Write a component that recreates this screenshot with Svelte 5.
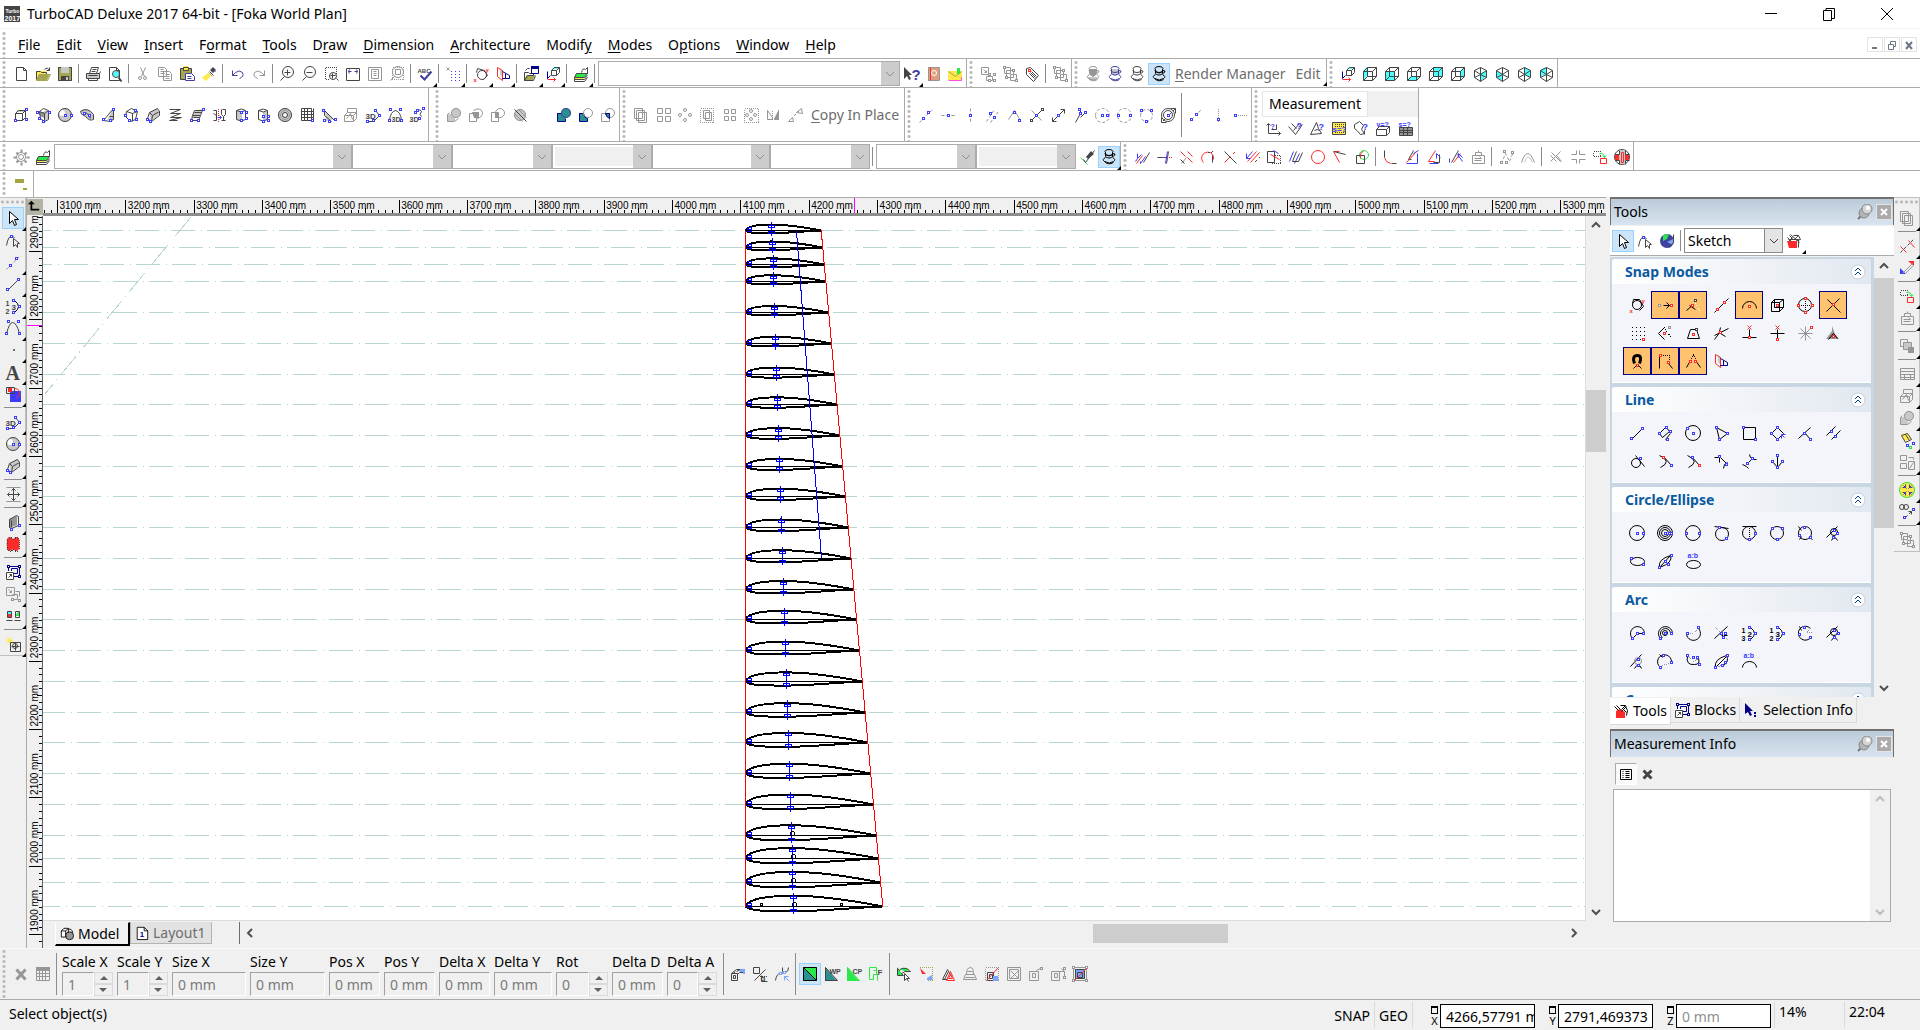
<script>
  const colors = {
    k: '#444444', K: '#000000', b: '#3c3cff', B: '#00008b', r: '#ff2a2a', g: '#969696', G: '#c8c8c8',
    w: '#ffffff', y: '#ffe84a', o: '#a5a552', t: '#4aa5a5', T: '#2a9090', c: '#4affff', l: '#2ae84a',
    n: '#4040a0', p: '#ff4ae8', s: '#e0a080', u: '#7aa5ff'
  };

  // Each icon is a list of shapes split by ";": operator, colour key, then geometry on a 16 unit grid.
  // s stroke, f fill, d dotted stroke, v sparse dots, h heavy stroke, c circle, e filled circle, n nodes, x text
  const cube = 'sk M1 5H10V14H1ZM1 5L5 1H14V10L10 14M10 5L14 1M5 1V10H14M5 10L1 14';
  const iso = 'sk M8 1L14 4V11L8 15L2 11V4ZM2 4L8 8L14 4M8 8V15M8 1V8M2 11L8 8L14 11';
  const groupG = 'sg M4 4H11V11H4ZM2 1H8V7H2ZM8 8H14V14H8Z;ng 2,1 11,4 4,11 14,14';
  const cup = 'M4 3A4 2 0 1 0 11 3A4 2 0 1 0 4 3V7A4 3 0 0 0 11 7V3M11 4Q15 4 13 6L11 7M4 8Q0 10 3 12Q8 15 12 12Q15 10 11 8M3 12Q7 16 12 13';
  const arc3 = 'sK M9 2Q17 8 9 14;nb 8,2 14,8 8,14';
  const icons = {
    app: 'fk M0 0H16V16H0Z;xw 1,6,5,Turbo;xw 0,14,7,2017',
    newdoc: 'sk M3 1H10L13 4V14H3ZM10 1V4H13',
    open: 'fy M1 13V5H11V8H4Z;fo M1 14L4 8H15L12 14Z;sk M1 13V5H5L6 6H11V8M9 3Q12 0 14 4M14 1V4H11;so M1 14L4 8H15L12 14Z',
    save: 'fo M1 1H15V15H1Z;sk M1 1H14V14H1Z;fG M4 1H12V7H4Z;fk M4 10H12V15H4Z;fG M9 11H11V14H9Z',
    print: 'fG M1 7H14V13H1Z;sk M4 7L6 1H13L11 7M7 3H11M6 5H10M1 7H14V12H1ZM3 12V14H12V12M3 9H12M14 7L15 5',
    preview: 'sk M2 1H9L12 4V14H2ZM9 1V4H12;ec 9,8,3;ck 9,8,4;hk M11 11L14 15',
    cut: 'sg M5 1L9 10M10 1L6 10;cg 5,12,2;cg 10,12,2',
    copy: 'sg M1 1H7L9 3V10H1ZM3 3H6M3 5H7M3 7H7M6 5H12L14 7V14H6ZM8 8H12M8 10H12M8 12H12',
    paste: 'fo M1 2H12V13H1Z;sk M1 2H12V13H1Z;fy M4 0H9V4H4Z;sk M4 1H9V4H4Z;fw M6 7H15V15H6Z;sn M6 7H12L15 10V14H6ZM8 10H12M8 12H12',
    brush: 'fy M1 12L7 7L10 10L5 15Z;fk M9 4L12 1L15 4L12 7Z;so M7 6L11 10;sk M8 5L12 9;sn M11 2L14 5',
    undo: 'sn M3 4V9H8M3 9L6 6Q10 3 13 6Q15 10 10 12',
    redo: 'sg M13 4V9H8M13 9L10 6Q6 3 3 6Q1 10 6 12',
    zoomin: 'ck 9,6,6;sk M8 3V9M5 6H11M5 10L1 14',
    zoomout: 'ck 9,6,6;sk M5 6H11M5 10L1 14',
    zoomwin: 'dk M2 1H13V8M2 1V13H6;ck 10,10,4;sk M9 7V12M7 9H12M13 12L15 14',
    zoomext: 'sk M1 2H14V14H1Z;sn M3 5H6M4 3L3 5L4 7M9 5H12M11 3L12 5L11 7',
    page: 'sg M1 1H14V14H1ZM4 3H11V12H4ZM6 5H9M6 7H9M6 9H9',
    zoomsel: 'cg 9,6,6;sg M6 3H11V8H6ZM5 10L1 14;dg M3 1H14V13H3Z',
    spell: 'xk 0,6,6,ABC;hn M3 9L7 13L14 5',
    grid: 'vb M5 5H14M5 8H14M5 11H14M5 14H14;sg M1 1L4 4M4 1L1 4',
    ucs: 'ck 9,9,5;sk M4 2L11 4L14 9L10 13M4 2L3 6;xr 0,15,6,x;xr 12,5,6,y',
    facet: 'fG M5 2L8 5V12L5 9Z;sr M2 1L7 4V14L2 10Z;sB M7 5L14 9V12H7M10 7V12',
    openv: 'fo M1 14L4 9H12L10 14Z;sk M1 14V6H5L6 7H10V9H4L1 14H10L12 9M2 4L4 2H6;fB M8 0H16V3H8Z;sB M8 1H15V7H8Z',
    axes: 'fc M7 3L9 1H14L12 3Z;sk M6 4H11V9H6ZM6 4L9 1H14V6L11 9M11 4L14 1;sB M2 5V12L5 9;sr M2 13H10M8 11L10 13L8 15',
    layers: 'fl M3 8H14L11 12H1Z;fy M1 12H11V14H1Z;sk M3 7H14L11 11H1ZM1 11V15H11L14 11M1 13H11L14 9M8 6Q9 1 12 3L14 1V7',
    help: 'fk M1 1V13L4 10L6 14L8 13L6 9H9Z;xn 8,13,15,?',
    book: 'fs M3 1H14V15H3Z;sg M3 1H14V14H3Z;cw 9,7,3;sr M5 1V14',
    mail: 'fy M1 5H15V14H1Z;so M1 5L8 10L14 5;fl M10 2H13V8H10Z;sp M1 14H14V11',
    group: 'sg M1 1H8V8H1ZM3 3L6 6M6 4V6H4M6 10H12V14H6Z;ng 9,8 14,8 9,14 14,14',
    ungroup: groupG,
    tag: 'sk M2 2L6 1L14 9L9 15L2 8ZM5 7L10 12M7 5L12 10M6 6L11 11;nr 5,4',
    groupedit: groupG,
    cupg: 'fg M4 3H11V9L8 11L5 9Z;fG M2 11H13L10 14H5Z;sg ' + cup,
    cupb: 'fG M4 3H11V8L8 10L5 8Z;sn ' + cup,
    cupw: 'sk ' + cup,
    cupk: 'sK ' + cup + 'M4 5Q8 8 11 5',
    vleft: 'fc M1 5L5 1V10L1 14Z;' + cube,
    vfront: 'fc M1 5H10V14H1Z;' + cube,
    vbottom: 'fc M1 14L5 10H14L10 14Z;' + cube,
    vback: 'fc M5 1H14V10H5Z;' + cube,
    vright: 'fc M10 5L14 1V10L10 14Z;' + cube,
    iso1: 'fc M8 8L14 4V11L8 15Z;' + iso,
    iso2: 'fc M2 4L8 8V15L2 11Z;' + iso,
    iso3: 'fc M8 1L14 4V11L8 8Z;' + iso,
    iso4: 'fc M8 1L2 4V11L8 8Z;' + iso,
    box: 'fG M3 5L5 3H13L11 5Z;sk M2 6L5 3H12V10L9 13H2ZM2 6H9V13M9 6L12 3;nb 13,2 2,13 13,12',
    rbox: 'fg M3 5H9V11L5 9Z;fG M9 4H13V12L9 14Z;sk M4 4L8 1L13 3V12L9 14L5 11ZM4 4L9 6L13 3M9 6V14;nb 2,5 14,5 4,11 8,14',
    sphere: 'eG 8,8,7;ew 5,6,3;ck 8,8,7;nb 8,8 14,8',
    hemi: 'fG M1 4Q8 -1 14 7V12Q10 14 6 9Z;sk M1 4Q8 -1 14 7V12Q10 14 6 9Q1 7 1 4M4 5Q9 5 11 11;nb 5,6 10,8',
    cone: 'fG M6 13L12 2V14Z;sk M2 13L12 1V12Q7 15 2 13M8 9H12;nb 12,2 2,12 9,13',
    prism: 'sk M3 4L8 1L14 4L12 12L7 14L2 9ZM3 4L9 6L14 4M9 6V14;nb 2,8 6,13 13,12 12,3',
    tube: 'fG M4 6L12 1L14 8L6 14Z;sk M4 5L12 1L14 4V8L6 14L2 11ZM4 5L7 8L14 4M7 8L6 14;nb 2,12 5,14',
    helix: 'sk M2 2H13L3 6H13L3 10H14L2 13H10',
    sweep: 'fG M5 5L13 2L11 9L3 12Z;sk M5 3H13L11 8H3ZM3 8L2 13H9L11 8M5 5H12M4 10H10;nb 14,2 2,13 9,13',
    lathe: 'sk M2 3H5V13H2M5 8L2 6M11 2H14V7L12 9V13M10 13H14M10 2V7L12 9;dr M7 1V15;sb M6 10H10M8 8L10 10L8 12',
    cyl: 'fG M4 4H9V13H4Z;sk M3 3Q8 0 12 3V12Q8 15 3 12ZM3 3Q8 6 12 3;nb 8,5 13,5 8,13 13,11',
    cyl2: 'fG M8 5H12V13H8Z;sk M3 3Q8 0 12 3V12Q8 15 3 12ZM3 3Q8 6 12 3;nb 8,9 13,9 13,13 8,14',
    torus: 'eG 8,8,7;ck 8,8,7;cg 8,8,5;ew 8,8,2;ck 8,8,3',
    mesh: 'sk M2 1H12V13H2ZM5 1V13M8 1V13M2 4H14M2 7H14M2 10H14M14 1V12;nb 13,13',
    wedge: 'fG M4 4L13 12L5 14Z;sk M3 3L13 13M3 3V8L10 14;nb 2,3 3,13 14,12 8,14',
    boxg: 'sg M1 8L4 5H13L10 8ZM1 8V14H10V8M13 5V11L10 14M4 5V1H13V5M3 11L7 6L9 12',
    d3a: 'xk 0,11,8,3D;sk M3 14H8L14 8L10 3;nb 10,3 14,8 8,13 2,14',
    d3b: 'xk 4,14,7,3D;sk M2 13Q3 4 8 3Q13 4 14 13;nb 2,13 14,13 3,2 13,2',
    d3c: 'xk 0,14,7,3D;sk M7 4Q11 1 12 4Q9 7 12 9;nb 6,5 14,1 10,11 8,3',
    bl1: 'fG M1 7H9V14H1Z;eG 10,6,5;cg 10,6,5;sg M3 5L1 7V14H8L12 11',
    bl2: 'sg M1 6H8V14H1ZM5 3Q12 -1 14 5Q14 10 8 11;fg M4 5H11V11H6Z',
    bl3: 'cg 10,6,5;sg M1 5H8V14H1Z;fg M5 5H8V11H5Z',
    bl4: 'eG 8,8,6;cg 8,8,6;sk M2 2L14 14;sg M6 2L14 10M2 6L10 14',
    un1: 'fT M1 6H9V14H1Z;eT 10,6,5;sB M1 6H5M9 11V14H1V6;cn 10,6,5',
    un2: 'fT M1 6H5Q6 10 9 10V14H1Z;sB M1 6H5Q6 11 9 11V14H1Z;cg 10,6,5',
    un3: 'sg M1 6H9V14H1Z;cg 10,6,5;fT M5 6H10V11Q6 10 5 6Z;sB M5 6H9V11Q6 10 5 6',
    c1: 'sg M1 1H9V11H1ZM3 3H11V13H3ZM5 5H13V15H5Z',
    c2: 'sg M2 1H7V6H2ZM10 1H15V6H10ZM2 9H7V14H2ZM10 9H15V14H10Z',
    c3: 'cg 8,3,2;cg 3,8,2;cg 13,8,2;cg 8,13,2',
    c4: 'sg M4 3H10V11H4ZM6 5H12V13H6Z;dg M1 1H14V15H1Z',
    c5: 'sg M3 2H7V6H3ZM10 2H14V6H10ZM3 9H7V13H3ZM10 9H14V13H10Z',
    c6: 'cg 8,4,2;cg 4,8,2;cg 12,8,2;cg 8,12,2;dg M1 1H15V15H1Z',
    c7: 'sg M2 3V12H7V10L2 3;fg M9 12L14 2V13H9Z;dg M7 3V13',
    c8: 'sg M9 5L14 1L15 6ZM1 14L5 10L6 14Z;dg M5 10L11 4',
    p1: 'qg M1 15L15 1;nb 5,11 10,5', p2: 'qg M1 8H15;nb 8,8', p3: 'qg M8 1V15;nb 8,8',
    p4: 'qg M2 14L10 2M6 15L14 4;nb 6,6 10,10', p5: 'sg M2 12L8 3L14 13;nb 8,5 13,13',
    p6: 'sg M3 3L13 13;sk M2 14L14 2;nb 8,8;nk 3,13 14,2', p7: 'sk M2 14L14 2M10 2H14V6M2 10V14H6;nb 8,8',
    p8: 'sk M3 15L8 6V1M8 10L14 4;nb 8,6 7,2 13,5', p9: 'qg M1 8A7 7 0 1 1 15 8A7 7 0 1 1 1 8;nb 8,8 13,8', p10: 'qg M1 8A7 7 0 1 1 15 8A7 7 0 1 1 1 8;nb 2,8 14,8',
    p11: 'qg M2 8A6 6 0 1 1 14 8A6 6 0 1 1 2 8;nb 3,3 13,3 8,14', p12: 'ck 8,8,7;ck 8,8,5;dk M1 15L15 1;sk M1 15V10M1 15H6M15 1H10M15 1V6;nb 8,8',
    q1: 'qg M3 12L13 2;nb 3,12 8,7', q2: 'dg M8 1V14;nb 8,12', q3: 'dg M3 8H14;nb 3,8',
    m1: 'sk M3 3V13H15M1 5L3 3L5 5M13 11L15 13L13 15M6 9H11V4;xb 5,8,7,?', m2: 'sk M1 6L8 14L15 4M4 3L9 8M6 10L12 3;xb 9,8,9,?',
    m3: 'sk M1 14L7 2L9 8L12 13ZM5 10Q8 8 10 10;xb 9,9,9,?', m4: 'fy M1 2H15V15H1Z;sk M1 2H14V14H1Z;dk M3 4H12M3 6H12M3 12H12;xb 1,11,8,s=?',
    m5: 'sk M1 4L6 1L10 5L8 9L11 13L7 14Q3 9 1 8ZM11 10V14;xb 9,9,9,?', m6: 'sk M1 9L4 6H14L11 9ZM1 9V15H11V9M14 6V12L11 15;xb 1,6,7,v=?',
    m7: 'fg M2 7H15V15H2Z;sk M2 7H15V15H2ZM2 10H15M2 12H15M6 7V15M10 7V15;xb 1,6,7,s=?',
    gear: 'cg 8,8,5;cg 8,8,3;hg M8 0V3M8 13V16M0 8H3M13 8H16M3 3L5 5M11 11L13 13M13 3L11 5M3 13L5 11',
    pick: 'sl M1 8L8 15;sk M6 13L4 10M6 13L15 1;fk M7 8L12 2L15 5L9 10Z',
    e1: 'sr M2 14L8 6;sk M9 13L15 3;sb M3 4V9L7 5M1 12L3 9M6 12V14L11 7', e2: 'sk M1 8H7M10 14L12 2;sb M9 14L11 2M7 8H10;dr M10 8H15',
    e3: 'sr M2 2L7 7M9 8L14 13M9 2L14 7;sg M3 14L8 8;sk M2 10L6 14', e4: 'sr M3 13A6 6 0 1 1 13 10;sk M12 6V13;dk M8 3L14 2',
    e5: 'sk M2 2L14 14;sr M2 13L8 7;dr M9 6L14 1', e6: 'sr M3 12L12 2M6 13L15 3;sb M2 4V9L8 2M2 9H6;dk M9 14L15 8',
    e7: 'sk M1 2H8V13H1Z;sr M4 5L13 10;dk M8 6H14V14H5;sb M7 1L12 4', e8: 'sb M5 2L1 12M11 4L6 14;sk M8 2L4 12H10L14 3',
    e9: 'cr 8,8,7', e10: 'sr M1 2L7 13M2 2H7;sk M1 2L13 5', e11: 'cl 10,6,5;sk M2 6H10V14H2Z;sr M9 2Q5 3 6 9',
    f1: 'sk M2 1V8;sr M2 8Q3 13 8 14;sk M9 14H14', f2: 'sk M9 1L4 10H7;sr M11 3L2 13;sb M2 14H13V4M9 4L14 1',
    f3: 'sk M7 13H13V5;sr M9 1L2 12H8;sb M10 9V4L14 8M3 14H12', f4: 'sk M3 13L10 1;sr M5 13L12 4;sb M1 9V13M10 8V4L14 8M9 5L14 12',
    f5: 'sg M2 6H14V14H2ZM5 6V3H8V1M8 3H11V6M4 9H11L9 7M4 11H11', h1: 'qg M3 14L7 4L11 12L15 2;ng 3,13 8,13 6,2 14,3', h2: 'sg M1 13Q7 -5 14 13;sG M4 13Q7 2 12 13',
    i1: 'sg M3 3L12 12M2 12L12 2M2 6L8 12M8 6L13 12', i2: 'sg M1 5H6V1M9 1V5H15M15 10H9V14M6 14V10H1', i3: 'dk M1 2H8V7H1Z;sl M7 4Q12 3 12 8M10 6L12 8L14 6;sr M8 9H14V14H8Z', i4: 'ck 8,8,8;fr M1 5H15V11H1Z;fG M5 1H11V15H5Z;sr M7 3H9V13H7Z;sk M5 1V5H1M11 1V5H15M1 11H5V15M11 15V11H15',
    arrow: 'fw M4 1V13L7 10L9 15L11 14L9 9H13Z;sK M4 1V13L7 10L9 15L11 14L9 9H13Z', nodearrow: 'sk M1 13Q3 2 7 4L9 5M8 6V14L10 12L12 15L12 11H14Z;nb 6,4',
    construct: 'qg M1 15L15 1;nb 5,11 11,4', line: 'sk M3 13L13 3;nb 2,13 13,3', arc3: 'xk 0,7,7,1;xk 0,15,7,2;xk 6,11,8,3;' + arc3,
    curve: 'sk M1 13Q4 2 7 2Q11 2 14 13;nb 1,13 14,13 3,1 13,1', point: 'ek 9,8,1', text: 'yk 0,15,20,A', insert: 'fb M5 5H16V16H5Z;sk M1 1H9V7H1Z;fr M3 2H7V6H3Z;sr M9 2Q15 2 14 9L11 12',
    dim: 'sg M1 1H15M1 15H15;sk M8 2V14M2 8H14M6 4L8 2L10 4M6 12L8 14L10 12M4 6L2 8L4 10M12 6L14 8L12 10',
    wall: 'fg M4 5L12 2V11L4 14Z;sk M4 5L11 1L13 2V11L6 14L4 13ZM6 6V13;nb 14,11 6,15', hatch: 'fr M4 1Q6 1 8 3Q10 1 12 1Q15 3 14 6Q15 8 14 10Q15 13 12 15Q10 15 8 13Q6 15 4 15Q1 13 2 10Q1 8 2 6Q1 3 4 1Z;dk M4 1Q6 1 8 3Q10 1 12 1Q15 3 14 6Q15 8 14 10Q15 13 12 15Q10 15 8 13Q6 15 4 15Q1 13 2 10Q1 8 2 6Q1 3 4 1Z',
    block: 'sB M3 2H14V12H3ZM6 4H12V9H6Z;nB 3,2 14,2 14,12;fw M1 7H9V15H1Z;sk M1 8H8V15H1ZM3 13L6 10M4 10H6V12', blockg: 'sg M1 1H9V9H1ZM3 3L6 6M6 4V6H4M7 8H12V13H7M10 5H14V10;ng 7,13 14,14', palette: 'fc M2 3H6V8H2Z;fr M2 6H6V9H2Z;fl M10 8L14 3V8Z;sk M2 3H6V9H2ZM10 3H14V9H10ZM1 12H7M9 12H15', newview: 'sy M4 1V8M1 4H8M1 1L7 7M7 1L1 7;sk M5 6H15V15H5ZM10 7V14M6 10H14;ck 10,10,3',
    globe: 'en 8,8,7;fl M4 2L10 1L8 6L4 8Z;fu M8 9L14 6V12Z;sk M14 1V9L10 14', kit: 'fr M1 8H11V15H3Z;sk M2 6H12V14M2 8L6 4M3 2L6 5M7 2H12L8 6M12 2L14 6L10 7M4 1L13 9M1 4L5 8',
    toolsK: 'fr M3 8L7 6L12 9V15H3Z;sK M1 3L5 7M3 2L7 6M7 2H12L8 6M12 3L14 7L13 12M9 5L13 9M13 3L8 8', selinfo: 'fB M2 1V12L5 10L7 14L9 13L7 9H10Z;fB M11 10H13V12H11ZM11 13H13V15H11Z',
    model: 'fw M1 3H8V11H1Z;sK M1 4L4 1H9V8L6 11H1ZM1 4H6V11M6 4L9 1;eg 11,10,4;cK 11,10,5;sK M9 2Q13 1 14 6', layout: 'fw M2 1H10L14 5V15H2Z;sK M2 1H10L14 5V15H2ZM10 1V5H14;xB 5,12,9,1',
    x: 'Hg M3 3L12 13M12 3L3 13', sheet: 'sg M1 1H14V14H1ZM1 4H14M4 4V14M7 4V14M10 4V14M1 7H14M1 10H14;fg M1 1H15V4H1Z',
    b1: 'sk M1 7H7V14H1ZM3 9H5V12H3ZM1 7L6 3H14V6H9L7 8M6 5L10 3M3 5L5 7;fu M10 3H15V8H13V6H10Z', b2: 'sk M1 1H7V7H1ZM9 9V15H15M2 14L13 3;xk 8,14,8,d;dk M5 10H15', b3: 'sk M1 14Q2 7 6 7L11 6Q14 5 14 1;sk M8 1V5L11 7;nu 6,7 10,6;su M10 10L15 15M10 14V10H14',
    s1: 'fT M1 1L15 15H1Z;fl M1 1H15V15Z;sK M1 1H14V14H1ZM1 1L14 14', s2: 'fT M1 1L13 15H1Z;sk M1 1L13 14H1Z;xk 5,7,7,WP', s3: 'fl M1 1L13 15H1Z;sl M1 1L13 14H1Z;xk 6,7,7,CP', s4: 'sl M1 1H8V8H5V13H1ZM5 4H8M5 8H9V14;xk 9,8,8,F',
    r1: 'fl M1 1L7 9H1ZM4 3Q8 1 13 3L10 6Z;sk M1 2V9H7L5 7Q8 4 14 5L10 2Q4 1 3 4L1 2;fw M8 6V15L13 12Z;sk M8 7V14L10 12L12 15M8 7L13 12H10', r2: 'fr M2 2L8 8H4Z;fu M9 12L14 9V14H9Z;do M1 1H14V14H8', r3: 'sk M2 13L7 3L11 10M4 13L8 5M2 13H7;sr M6 14L10 5L14 14ZM8 12L10 8L12 12Z', r4: 'sg M1 13H14L12 8H3ZM4 8Q4 1 8 1Q11 1 11 8M3 11H12M5 5H10', r5: 'dg M1 1H14V14H1Z;sk M3 6H9V14H3ZM5 8H8V12H5Z;sr M2 14L14 1;fu M9 10H14V15H9Z', r6: 'sg M1 1H14V14H1ZM4 4L12 12M12 4L4 12M3 3H12V12H3Z', r7: 'sg M1 5H10V14H1ZM4 7H7V11H4ZM8 4L14 1;ng 13,2', r8: 'sg M1 5H9V14H1ZM4 7H7V11H4ZM6 5H14M11 2L14 5V12;ng 14,2 14,11', r9: 'sg M1 1H14V14H1Z;ng 1,1 14,1 1,14 14,14;fu M3 3H13V13H3Z;sk M3 3H12V12H3ZM5 6H10V11H5Z;sr M2 14L14 2',
    z1: 'xr 0,15,6,x;xr 12,5,6,y;sK M4 2H10L14 9L10 13M4 2L3 6;cK 8,8,5', z2: 'ng 2,8;sK M6 8H12M9 5L12 8L9 11;nr 14,8', z3: 'sK M1 13L8 7M4 8L10 12;dw M9 4L15 14;nr 7,8;nk 10,3', z4: 'sK M1 15L15 1;nr 4,12 11,5', z5: 'sK M1 11A7 7 0 1 1 15 11;nr 8,9', z6: 'sK M2 5H10V14H2ZM2 5L5 2H14V10L10 14M10 5L14 2M5 2V10H14;nr 8,8', z7: 'cK 8,8,7;dK M1 8H15M8 1V15;nr 8,1 8,15 1,8 15,8', z8: 'sK M1 14L14 1M2 2L15 15;nr 8,7',
    z9: 'vK M2 2H15M2 6H15M2 10H15M2 14H12;nr 14,14', z10: 'sK M7 2L1 8L7 14;dK M7 2L14 13;nr 7,8;ng 12,2', z11: 'sK M2 13L5 4H11L14 13Z;nr 8,9;nk 11,4', z12: 'sK M1 14Q7 8 7 2M1 10L15 3M7 8L12 11;nr 7,7', z13: 'sK M8 4V12M1 12H15;sr M6 0L10 4M10 0L6 4;nr 8,12', z14: 'sK M8 4V13M1 8H15;sr M6 0L10 4M10 0L6 4;nr 8,14', z15: 'sg M8 1V15M1 8H15M3 3L13 13M13 3L3 13;nr 14,2', z16: 'fg M1 14L7 6V1L10 9L14 14Z;sK M3 14L8 8L12 13;nr 8,11', z17: 'HK M5 10Q2 2 8 2Q13 2 10 10;nr 8,12;sK M4 15L7 12M12 15L9 12', z18: 'sK M2 2V15;dK M3 2H12V9;sK M11 10L15 15;nr 3,2 11,9', z19: 'sK M1 14L5 7M15 14L10 7;dK M8 1L4 8M8 1L11 8;nr 5,8 10,8',
    l1: 'sK M3 13L13 3;nb 2,13 13,3', l2: 'sK M2 8L8 2M12 6L5 12M12 6L9 2M2 8L5 12M8 14L13 8;nb 2,8 9,2 13,6 10,14', l3: 'cK 8,8,8;nb 2,3 8,8', l4: 'sK M3 2L14 8L6 14Z;nb 3,2 14,8 6,14', l5: 'sK M2 2H14V14H2Z;nb 2,2 14,14', l6: 'sK M8 2L14 8L8 14L2 8Z;nb 8,2 2,8 8,14;sb M12 9V13M12 9H16M12 9L15 12', l7: 'sK M1 13L13 2M7 7L13 14;nb 7,8 13,14', l8: 'sK M1 10L10 1M6 14L15 5;nb 6,6 10,11',
    l9: 'cK 7,10,5;sK M6 2L15 13;nb 11,5', l10: 'sK M2 2Q15 8 3 14M6 3L14 12;nr 6,4;nb 14,12', l11: 'sK M2 2Q15 8 3 14M6 3L14 12;nb 7,4;nr 14,12', l12: 'sK M1 4H7L14 11M6 3V9M10 15Q10 10 14 9;nb 6,3 13,11', l13: 'sK M1 11Q6 13 7 15M5 11L11 5M8 1Q9 7 15 6;nb 6,10 11,5', l14: 'sK M8 2V13M3 8L8 14L13 8;nb 8,2 3,8 13,8 8,14',
    o1: 'cK 8,8,8;nb 8,8 14,8', o2: 'cK 8,8,8;cK 8,8,6;cK 8,8,4;nb 8,8 12,8 14,8', o3: 'cK 8,8,8;nb 1,8 14,8', o4: 'cK 9,9,7;sK M1 1L15 3;nb 6,2 13,13', o5: 'cK 8,8,7;sK M1 1H15;dK M8 2V14;nb 14,8 8,14', o6: 'cK 8,8,7;nb 3,3 13,3 8,14', o7: 'cK 8,8,7;sK M1 1L4 5M2 14L4 11M12 12L15 14;nb 7,2 2,10 13,12', o8: 'cK 9,7,4;sK M1 12L12 1M6 15Q9 9 12 15;nb 9,5 12,8 8,12',
    o9: 'sK M1 8A7 4 0 1 1 15 8A7 4 0 1 1 1 8;nb 2,5 14,11', o10: 'sK M2 14Q0 6 13 2Q16 9 2 14L13 2;nb 14,2 2,14 8,8 11,11', o11: 'xb 2,4,7,a:b;sK M1 11A7 4 0 1 1 15 11A7 4 0 1 1 1 11',
    a1: 'sK M3 13A7 7 0 1 1 15 8H8L3 13;nb 8,8 14,8 3,13', a2: 'sK M3 13A7 7 0 1 1 15 8M5 12A5 5 0 1 1 13 8;cK 8,8,3;nb 3,13 8,8 14,8', a3: 'sK M1 7A7 7 0 1 0 13 3;dg M2 8H8L13 3;nb 2,8 13,2', a4: 'sK M1 13L14 1M8 10H14;qg M2 2L14 14;nb 8,8 12,8 10,12', a5: 'xK 0,7,7,1;xK 0,15,7,3;xK 6,11,8,2;' + arc3, a6: 'xK 0,7,7,1;xK 0,15,7,2;xK 6,11,8,3;' + arc3, a7: 'sK M2 1L4 5M13 3A7 7 0 1 0 14 11;dg M13 3L9 7H14;nb 7,2 2,9 13,12', a8: 'cK 9,7,4;sK M1 12L12 1M6 15Q9 9 12 15;nb 9,5 13,8 9,12',
    a9: 'sK M1 13L12 1M5 15Q9 8 12 15;cg 9,8,4;nb 9,6 9,12', a10: 'sK M2 1L5 4M3 14A7 7 0 1 1 14 9;dg M3 13L13 9;nb 6,2 14,9 3,14', a11: 'sK M2 2Q0 12 9 11Q15 11 13 5;dg M2 2L8 8L13 5;nb 2,2 8,4 12,4 14,11', a12: 'sK M2 14Q0 6 13 2Q16 8 10 12M2 14L14 2;dg M5 13L13 9;nb 14,2 2,14 12,9 9,12', a13: 'xb 2,4,7,a:b;sK M1 14A7 6 0 0 1 15 14',
    rr1: 'sg M1 1H9V11H1ZM3 3H11V13H3ZM5 5H13V15H5Z', rr2: 'sr M9 2L15 9M1 8L7 14;qk M1 14L14 1', rr3: 'fb M1 8L7 14H1Z;fr M9 1L15 6L15 1Z;sg M3 13L13 3M6 13L14 5', rr6: 'sg M1 1H8V8H1Z;fG M4 4H12V12H4Z;sg M4 4H12V11H4Z;fg M9 9H15V15H9Z', rr7: 'sg M1 2H15V13H1ZM1 5H15M1 8H15M1 11H15M5 8V13M11 8V13', rr10: 'fy M2 3L8 1L12 7L6 9Z;sk M2 3L8 1L12 7L6 10ZM6 2L10 8;nb 8,13 14,11;nl 11,15', rr11: 'sg M1 1H7V6H1ZM1 9H7V14H1ZM9 7H15V15H9ZM10 14L14 8M9 3H14V5', rr12: 'ey 8,8,8;cl 8,8,8;sn M3 5H6V2M10 2V5H13M13 10H10V13M6 13V10H3M4 3L7 6M12 3L9 6M4 12L7 9M12 12L9 9', rr13: 'ck 3,3,3;ck 7,3,3;qk M6 13L13 6;sk M9 7H12V10;nb 5,13 14,5',
    list: 'sK M2 3H13V13H2ZM4 5H5M7 5H11M4 7H5M7 7H11M4 9H5M7 9H11M4 11H5M7 11H11', close: 'Hk M3 4L11 12M11 4L3 12'
  };

  const ops = { s: 'stroke', h: 'heavy', H: 'bold', d: 'dots', v: 'sparse', q: 'dashes' };
  function shapes(name) {
    return (icons[name] ?? '').split(';').filter(Boolean).map((part) => {
      const kind = part[0];
      const color = colors[part[1]];
      const data = part.slice(2).trim();
      if (kind === 'n') return { kind, color, points: data.split(' ').map((p) => p.split(',').map(Number)) };
      if ('cexy'.includes(kind)) return { kind, color, v: data.split(',') };
      return { kind, color, data, cls: ops[kind] };
    });
  }

  const list = (text) => text.split(' ').map((t) => {
    if (t === '/') return { type: 'sep' };
    if (t === '_') return { type: 'gap' };
    if (t[0] === '#') return { type: 'combo', width: parseInt(t.slice(1)), dim: t.endsWith('g') };
    if (t[0] === '=') {
      const plain = t.startsWith('=Edit');
      const text = t.slice(1).replaceAll('~', ' ').replace('*', '');
      return { type: 'label', key: plain ? '' : text[0], rest: plain ? text : text.slice(1), drop: t.includes('*') };
    }
    return { type: 'tool', name: t.replace(/[*!]/g, ''), drop: t.includes('*'), on: t.includes('!') };
  });

  const menus = [['File', 0], ['Edit', 0], ['View', 0], ['Insert', 0], ['Format', 1], ['Tools', 0], ['Draw', 1], ['Dimension', 0], ['Architecture', 0], ['Modify', 5], ['Modes', 0], ['Options', 1], ['Window', 0], ['Help', 0]];

  const rows = [
    ['newdoc open save / print preview / cut copy paste brush / undo redo / zoomin zoomout zoomwin zoomext page zoomsel / spell* / grid* / ucs* facet* / openv* axes* / layers* / #302 help* book mail', 'group ungroup tag / groupedit', 'cupg cupb cupw cupk! =Render~Manager =Edit*', 'axes vleft vfront vbottom vback vright iso1 iso2 iso3 iso4'],
    ['box rbox sphere hemi cone prism tube helix sweep lathe cyl cyl2 torus mesh wedge boxg d3a d3b d3c', 'bl1 bl2 bl3 bl4 _ un1 un2 un3', 'c1 c2 c3 c4 c5 c6 c7 c8 =Copy~In~Place', 'p1 p2 p3 p4 p5 p6 p7 p8 p9 p10 p11 p12 / q1 q2 q3'],
    ['gear layers #298 #100 #100 #100g #118 #100 / #100 #100g pick cupk!*', 'e1 e2 e3 e4 e5 e6 e7 e8 e9 e10 e11 / f1 f2 f3 f4 f5 / h1 h2 / i1 i2 i3 i4']
  ].map((row) => row.map(list));

  const measure = list('m1 m2 m3 m4 m5 m6 m7');
  const leftTools = list('arrow!* nodearrow construct* line* arc3* curve* point* text* insert* / d3a* sphere* tube* / dim* / wall* hatch* / block* blockg* palette* / newview*');
  const rightTools = list('rr1* / rr2* rr3* / i3* f5* / rr6* / rr7* boxg* bl1* rr10* rr11* / rr12* rr13* / ungroup');

  const sections = [
    { title: 'Snap Modes', items: list('z1 z2! z3! z4 z5! z6 z7 z8! z9 z10 z11 z12 z13 z14 z15 z16 z17! z18! z19! facet') },
    { title: 'Line', items: list('l1 l2 l3 l4 l5 l6 l7 l8 l9 l10 l11 l12 l13 l14') },
    { title: 'Circle/Ellipse', items: list('o1 o2 o3 o4 o5 o6 o7 o8 o9 o10 o11') },
    { title: 'Arc', items: list('a1 a2 a3 a4 a5 a6 a7 a8 a9 a10 a11 a12 a13') },
    { title: 'Curve', items: [] }
  ];

  const fields = [
    { label: 'Scale X', value: '1', width: 55, spin: true }, { label: 'Scale Y', value: '1', width: 55, spin: true },
    { label: 'Size X', value: '0 mm', width: 78 }, { label: 'Size Y', value: '0 mm', width: 79 },
    { label: 'Pos X', value: '0 mm', width: 55 }, { label: 'Pos Y', value: '0 mm', width: 55 },
    { label: 'Delta X', value: '0 mm', width: 55 }, { label: 'Delta Y', value: '0 mm', width: 62 },
    { label: 'Rot', value: '0', width: 56, spin: true }, { label: 'Delta D', value: '0 mm', width: 55 },
    { label: 'Delta A', value: '0', width: 54, spin: true }
  ];
  const editTools = list('b1 b2 b3 / s1! s2 s3 s4 / r1 r2 r3 r4 r5 r6 r7 r8 r9');

  const coords = [['X', '4266,57791 mm'], ['Y', '2791,469373'], ['Z', '0 mm']];

  // Rulers: one major tick for every 100 mm
  const step = 68.34;
  const topMarks = Array.from({ length: 23 }, (_, i) => ({ label: 3100 + i * 100, at: 14.5 + i * step }));
  const sideMarks = Array.from({ length: 12 }, (_, i) => ({ label: 2900 - i * 100, at: 35.5 + i * 68.3 }));

  // Wing plan
  const ribY = [230, 247, 264, 281, 312, 343, 374, 404, 435, 466, 496, 527, 558, 589, 619, 650, 681, 712, 742, 773, 804, 835, 858, 882, 906];
  const phase = [26, 34, 27, 40];
  const x0 = 745;
  const ribs = ribY.map((y, i) => {
    const x1 = 820.7 + (y - 230) * 0.0911;
    const c = x1 - x0;
    const t = c * 0.078;
    const b = c * 0.035;
    const top = `M${x0} ${y}C${x0 + c * 0.02} ${y - t * 0.75} ${x0 + c * 0.18} ${y - t} ${x0 + c * 0.35} ${y - t}S${x0 + c * 0.8} ${y - t * 0.5} ${x1} ${y}`;
    const low = `M${x0} ${y}C${x0 + c * 0.04} ${y + b} ${x0 + c * 0.15} ${y + b} ${x0 + c * 0.35} ${y + b}S${x0 + c * 0.8} ${y + b * 0.2} ${x1} ${y}`;
    return { y, x1, t, b, top, low, mark: Math.round(x0 + c * 0.35), start: phase[i] ?? (i === 24 ? 35 : 40), round: i > 20 };
  });
</script>

{#snippet icon(name)}
  <svg class="icon" viewBox="0 0 16 16" aria-hidden="true">
    <g transform="translate(.5 .5)">
      {#each shapes(name) as s}
        {#if s.kind === 'n'}
          {#each s.points as [x, y]}
            <rect x={x - 1} y={y - 1} width="2" height="2" fill="#fff" stroke={s.color} />
          {/each}
        {:else if s.kind === 'c'}
          <circle cx={s.v[0] - 0.5} cy={s.v[1] - 0.5} r={s.v[2] - 0.5} fill="none" stroke={s.color} />
        {:else if s.kind === 'e'}
          <circle cx={s.v[0] - 0.5} cy={s.v[1] - 0.5} r={s.v[2]} fill={s.color} />
        {:else if s.kind === 'x' || s.kind === 'y'}
          <text x={s.v[0]} y={s.v[1]} font-size={s.v[2]} fill={s.color} class="glyph" class:serif={s.kind === 'y'}>{s.v[3]}</text>
        {:else if s.kind === 'f'}
          <path d={s.data} fill={s.color} transform="translate(-.5 -.5)" />
        {:else}
          <path d={s.data} fill="none" stroke={s.color} class={s.cls} />
        {/if}
      {/each}
    </g>
  </svg>
{/snippet}

{#snippet chevron(dir)}
  <svg class="chev {dir}" viewBox="0 0 12 12" aria-hidden="true"><path d="M2 8L6 4L10 8" /></svg>
{/snippet}

{#snippet items(all)}
  {#each all as it}
    {#if it.type === 'sep'}
      <span class="sep"></span>
    {:else if it.type === 'gap'}
      <span class="gap"></span>
    {:else if it.type === 'label'}
      <button class="word" class:drop={it.drop}>{#if it.key}<u>{it.key}</u>{/if}{it.rest}</button>
    {:else if it.type === 'combo'}
      <label class="combo" class:dim={it.dim} style:width="{it.width}px">
        <select aria-label="Property"><option></option></select>
        <span class="arrow">{@render chevron('down')}</span>
      </label>
    {:else}
      <button class="tool" class:on={it.on} class:drop={it.drop} aria-label={it.name}>{@render icon(it.name)}</button>
    {/if}
  {/each}
{/snippet}

{#snippet caption(title)}
  <header class="caption">
    <h2>{title}</h2>
    <button class="pin" aria-label="Pin">
      <svg viewBox="0 0 16 16"><path d="M1 15L5 11" stroke="#777" stroke-width="2" /><circle cx="7" cy="9" r="5" fill="#b4b4b4" stroke="#888" /><circle cx="10" cy="5" r="5" fill="#d4d4d4" stroke="#888" /><circle cx="11" cy="4" r="2" fill="#fff" /></svg>
    </button>
    <button class="shut" aria-label="Close">
      <svg viewBox="0 0 14 14"><path d="M4 4L10 10M10 4L4 10" /></svg>
    </button>
  </header>
{/snippet}

<div class="app">
  <header class="title">
    <span class="logo">{@render icon('app')}</span>
    <h1>TurboCAD Deluxe 2017 64-bit - [Foka World Plan]</h1>
    <div class="window">
      <button aria-label="Minimize"><svg viewBox="0 0 14 14"><path d="M1 6.500H13" /></svg></button>
      <button aria-label="Restore"><svg viewBox="0 0 14 14"><path d="M1.500 3.500H9.500V13.500H1.500ZM4 3V1.500H12.500V11.500H10" /></svg></button>
      <button aria-label="Close window"><svg viewBox="0 0 14 14"><path d="M1 1L13 13M13 1L1 13" /></svg></button>
    </div>
  </header>

  <nav class="menu">
    <span class="grip"></span>
    {#each menus as [name, key]}
      <button>{name.slice(0, key)}<u>{name[key]}</u>{name.slice(key + 1)}</button>
    {/each}
    <div class="mdi">
      <button aria-label="Minimize document"><svg viewBox="0 0 10 10"><path d="M2 8H7" stroke-width="2" /></svg></button>
      <button aria-label="Restore document"><svg viewBox="0 0 10 10"><path d="M1.500 4.500H6.500V9.500H1.500ZM3.500 4V1.500H8.500V6.500H7" /></svg></button>
      <button aria-label="Close document"><svg viewBox="0 0 10 10"><path d="M2 2L8 9M8 2L2 9" stroke-width="2" /></svg></button>
    </div>
  </nav>

  {#each rows as row, r}
    <div class="row" class:tall={r === 1}>
      {#each row as bar, b}
        <div class="bar" class:after={r === 1 && b === 1}>
          <span class="grip"></span>
          {@render items(bar)}
        </div>
      {/each}
      {#if r === 1}
        <div class="bar">
          <span class="grip"></span>
          <div class="measure">
            <div class="mtabs"><button>Measurement</button></div>
            <div class="mtools">{@render items(measure)}</div>
          </div>
        </div>
      {/if}
    </div>
  {/each}
  <div class="row inspector">
    <span class="grip"></span>
    <span class="swatches"><i></i><i></i></span>
  </div>

  <main>
    <aside class="side left"><span class="hgrip"></span>{@render items(leftTools)}</aside>

    <section class="doc">
      <div class="corner">
        <svg viewBox="0 0 16 16"><path d="M5 2L1 6H4V13H14V11H6V6H9Z" /></svg>
      </div>
      <svg class="ruler top">
        <line x1="1" x2="1" y1="12" y2="15" /><line x1="8" x2="8" y1="12" y2="15" />
        {#each topMarks as m}
          <line x1={m.at} x2={m.at} y1="2" y2="15" />
          {#each Array(9) as _, i}
            <line x1={m.at + (i + 1) * 6.834} x2={m.at + (i + 1) * 6.834} y1={i === 4 ? 10 : 12} y2="15" />
          {/each}
          <text x={m.at + 2} y="11">{m.label} mm</text>
        {/each}
        <line class="cursor" x1="811.5" x2="811.5" y1="0" y2="15" />
      </svg>
      <svg class="ruler vert">
        {#each Array(5) as _, i}
          <line y1={35.5 - (i + 1) * 6.83} y2={35.5 - (i + 1) * 6.83} x1={i === 4 ? 10 : 12} x2="15" />
        {/each}
        {#each sideMarks as m}
          <line y1={m.at} y2={m.at} x1="2" x2="15" />
          {#each Array(9) as _, i}
            <line y1={m.at + (i + 1) * 6.83} y2={m.at + (i + 1) * 6.83} x1={i === 4 ? 10 : 12} x2="15" />
          {/each}
          <text transform="translate(11 {m.at - 3}) rotate(-90)">{m.label} mm</text>
        {/each}
        <line class="cursor" y1="109.5" y2="109.5" x1="0" x2="16" />
      </svg>
      <svg class="canvas">
        <g transform="translate(-42.5 -215.5)">
          {#each ribs as r}
            <path class="axis" d="M{r.start} {r.y}H4000" />
          {/each}
          <path class="axis" d="M190 217L44 394" />
          {#each ribs as r}
            <path class="foil" d={r.top} />
            <path class="foil" d={r.low} />
            <path class="chord" d="M{x0} {r.y}H{r.x1}" />
          {/each}
          <path class="blue" d="M796 231L821 558" />
          <path class="red" d="M745 230V906M820.7 230L882.3 906" />
          {#each ribs as r}
            <path class="blue" d="M{r.mark} {r.y - r.t - 3}V{r.y + r.b + 3}M{r.mark - 3} {Math.round(r.y - r.t + 1)}H{r.mark + 3}v2h-6zM{r.mark - 3} {Math.round(r.y + r.b - 2)}H{r.mark + 3}v2h-6z" />
            <path class="blue" d="M746 {r.y - 1}h5v-2h-3l-2 3M746 {r.y + 1}h5v-2" />
            {#if r.round}<circle class="chord" cx={r.mark + 1} cy={r.y - 2} r="2" />{/if}
          {/each}
          <circle class="chord" cx="761" cy="904" r="1" />
          <circle class="chord" cx="841" cy="904" r="1" />
        </g>
      </svg>
      <div class="vscroll">
        <button aria-label="Scroll up">{@render chevron('up')}</button>
        <span class="thumb"></span>
        <button aria-label="Scroll down">{@render chevron('down')}</button>
      </div>
      <footer class="sheets">
        <button class="sheet active">{@render icon('model')}Model</button>
        <button class="sheet">{@render icon('layout')}Layout1</button>
        <div class="hscroll">
          <button aria-label="Scroll left">{@render chevron('west')}</button>
          <span class="thumb"></span>
          <button aria-label="Scroll right">{@render chevron('east')}</button>
        </div>
      </footer>
    </section>

    <section class="panel">
      {@render caption('Tools')}
      <div class="strip">
        <button class="tool on" aria-label="Select">{@render icon('arrow')}</button>
        <button class="tool" aria-label="Edit node">{@render icon('nodearrow')}</button>
        <button class="tool" aria-label="World">{@render icon('globe')}</button>
        <span class="sep"></span>
        <label class="combo live">
          <select aria-label="Palette"><option>Sketch</option></select>
          <span class="arrow">{@render chevron('down')}</span>
        </label>
        <button class="tool drop" aria-label="Toolkit">{@render icon('kit')}</button>
      </div>
      <div class="palette">
        <div class="groups">
          {#each sections as s}
            <section class="group">
              <button class="head">
                {s.title}
                <svg viewBox="0 0 16 16"><circle cx="8" cy="8" r="7" fill="#fff" stroke="#c3d0e0" /><path d="M5 7L8 4L11 7M5 11L8 8L11 11" /></svg>
              </button>
              <div class="cells">
                {#each s.items as it}
                  <button class="cell" class:picked={it.on} aria-label={it.name}>{@render icon(it.name)}</button>
                {/each}
              </div>
            </section>
          {/each}
        </div>
        <div class="vscroll">
          <button aria-label="Scroll palette up">{@render chevron('up')}</button>
          <span class="thumb long"></span>
          <button aria-label="Scroll palette down">{@render chevron('down')}</button>
        </div>
      </div>
      <div class="tabs">
        <button class="active">{@render icon('toolsK')}Tools</button>
        <button>{@render icon('block')}Blocks</button>
        <button>{@render icon('selinfo')}Selection Info</button>
      </div>
      {@render caption('Measurement Info')}
      <div class="minfo">
        <button class="tool framed" aria-label="List">{@render icon('list')}</button>
        <button class="tool" aria-label="Clear">{@render icon('close')}</button>
      </div>
      <div class="output">
        <textarea aria-label="Measurements" readonly></textarea>
        <div class="vscroll faint">
          <button aria-label="Scroll output up">{@render chevron('up')}</button>
          <button aria-label="Scroll output down">{@render chevron('down')}</button>
        </div>
      </div>
    </section>

    <aside class="side right"><span class="hgrip"></span>{@render items(rightTools)}</aside>
  </main>

  <section class="props">
    <span class="grip"></span>
    <button class="tool" aria-label="Cancel">{@render icon('x')}</button>
    <button class="tool" aria-label="Table">{@render icon('sheet')}</button>
    <span class="sep wide"></span>
    {#each fields as f}
      <label class="field" style:width="{f.width}px">
        <span>{f.label}</span>
        <span class="entry">
          <input value={f.value} />
          {#if f.spin}
            <span class="spin"><i></i><i></i></span>
          {/if}
        </span>
      </label>
    {/each}
    <span class="sep"></span>
    {@render items(editTools)}
  </section>

  <footer class="status">
    <p>Select object(s)</p>
    <button>SNAP</button>
    <button>GEO</button>
    {#each coords as [axis, value], i}
      <div class="coord">
        <div><input type="checkbox" aria-label="Lock {axis}" /><label for="c{axis}">{axis}</label></div>
        <input id="c{axis}" class="num" class:faded={i === 2} {value} />
      </div>
    {/each}
    <span class="zoom">14%</span>
    <span class="clock">22:04</span>
  </footer>
</div>

<style>
  :global(body) { margin: 0; }
  .app {
    display: flex; flex-direction: column; height: 100vh; overflow: hidden;
    background: #f0f0f0; color: #000; font: 14px/20px "Noto Sans", "Open Sans", sans-serif;
  }
  .app * { box-sizing: border-box; }
  button, input, select, textarea { font: inherit; color: inherit; margin: 0; padding: 0; border: 0; background: none; border-radius: 0; }
  h1, h2, p { margin: 0; font: inherit; }
  svg { display: block; flex: none; }
  u { text-underline-offset: 2px; }
  .icon { width: 16px; height: 16px; overflow: visible; }
  .stroke { stroke-width: 1; }
  .heavy { stroke-width: 2; }
  .bold { stroke-width: 3; }
  .dots { stroke-dasharray: 1 1; shape-rendering: crispEdges; }
  .sparse { stroke-dasharray: 1 3; shape-rendering: crispEdges; }
  .dashes { stroke-dasharray: 3 2; }
  .glyph { font-family: "Liberation Sans", sans-serif; font-weight: 700; }
  .glyph.serif { font-family: "Liberation Serif", serif; }

  .title { display: flex; align-items: center; height: 29px; flex: none; background: #fff; border-bottom: 1px solid #f4f4f4; }
  .logo { padding: 0 7px 0 4px; }
  .window { display: flex; margin-left: auto; padding-right: 4px; }
  .window button { width: 58px; height: 28px; display: grid; place-items: center; }
  .window svg { width: 14px; height: 14px; stroke: #000; fill: none; }

  .menu { display: flex; align-items: center; height: 30px; flex: none; padding-top: 2px; background: #fff; border-bottom: 1px solid #ababab; }
  .menu > button { padding: 0 8px; }
  .mdi { display: flex; gap: 1px; margin-left: auto; padding-right: 3px; }
  .mdi button { width: 16px; height: 15px; border: 1px solid #e2e2e2; display: grid; place-items: center; }
  .mdi svg { width: 10px; height: 10px; stroke: #6b7888; fill: none; }

  .row { display: flex; height: 29px; flex: none; background: #fff; border-bottom: 1px solid #ababab; }
  .row.tall { height: 54px; }
  .row.inspector { height: 26px; border: 0; }
  .bar { display: flex; align-items: center; padding-top: 1px; border-right: 1px solid #ababab; }
  .bar.after { margin-left: 4px; }
  .grip { width: 10px; align-self: stretch; flex: none; background: radial-gradient(circle, #b9b9b9 1px, transparent 2px) 2px 0 / 4px 5px repeat-y; }
  .hgrip { height: 9px; width: 100%; flex: none; background: radial-gradient(circle, #b9b9b9 1px, transparent 2px) 0 2px / 5px 4px repeat-x; }
  .tool { width: 22px; height: 22px; flex: none; display: grid; place-items: center; position: relative; }
  .tool.on { background: #cce4f7; outline: 1px solid #99d1ff; outline-offset: -1px; }
  .drop { position: relative; }
  .drop::after { content: ""; position: absolute; right: -1px; bottom: -2px; border: 2px solid #000; border-top-color: transparent; border-left-color: transparent; }
  .sep { width: 6px; flex: none; align-self: stretch; background: linear-gradient(#8c8c8c, #8c8c8c) 2px center / 1px calc(100% - 8px) no-repeat; }
  .sep.wide { width: 8px; }
  .gap { width: 22px; flex: none; }
  .word { padding: 0 5px; color: #6d6d6d; }
  .combo { display: grid; flex: none; height: 25px; border: 1px solid #ababab; background: #fff; }
  .combo select, .combo .arrow { grid-area: 1 / 1; }
  .combo select { appearance: none; width: 100%; height: 100%; }
  .combo .arrow { width: 18px; justify-self: end; background: #ccc; display: grid; place-items: center; pointer-events: none; }
  .combo.dim { background: #f0f0f0; box-shadow: inset 0 0 0 2px #fff; }
  .combo.live { width: 99px; border-color: #8a8a8a; }
  .combo.live select { padding-left: 3px; }
  .combo.live .arrow { background: #e4e4e4; border-left: 1px solid #8a8a8a; }
  .chev { width: 12px; height: 12px; fill: none; stroke: #505050; stroke-width: 2; }
  .combo .chev { stroke: #8f8f8f; stroke-width: 1; }
  .combo.live .chev { stroke: #404040; }
  .chev.down { transform: rotate(180deg); }
  .chev.east { transform: rotate(90deg); }
  .chev.west { transform: rotate(-90deg); }
  .measure { display: flex; flex-direction: column; width: 156px; align-self: stretch; padding-top: 2px; }
  .mtabs { background: #f0f0f0; height: 26px; display: flex; }
  .mtabs button { background: #fff; border: 1px solid #e4e4e4; width: 106px; }
  .mtools { display: flex; }
  .swatches { display: flex; width: 24px; border-right: 1px solid #ababab; }
  .swatches i { width: 9px; height: 4px; background: #a5a540; margin: 8px 0 0 5px; }
  .swatches i + i { width: 4px; height: 2px; margin: 17px 0 0 -1px; }

  main { display: flex; flex: 1; min-height: 0; }
  .side { width: 26px; flex: none; align-self: flex-start; display: flex; flex-direction: column; align-items: center; border: 1px solid #c0c0c0; border-width: 1px 1px 1px 0; }
  .side .sep { width: auto; height: 6px; background: linear-gradient(#8c8c8c, #8c8c8c) center 2px / 18px 1px no-repeat; }
  .side .drop::after { right: -2px; }

  .doc { flex: 1; min-width: 0; display: grid; grid-template: 18px minmax(0, 1fr) 27px / 16px minmax(0, 1fr) 20px; border-top: 1px solid #ababab; border-left: 1px solid #ababab; margin-right: 4px; }
  .corner { background: #b4b4a4; height: 16px; margin-top: 1px; }
  .corner svg { width: 14px; height: 14px; }
  .ruler { width: 100%; height: 100%; overflow: hidden; shape-rendering: crispEdges; background: #f0f0f0; }
  .ruler line { stroke: #000; }
  .ruler text { font: 10px "Liberation Sans", sans-serif; }
  .ruler .cursor { stroke: #ff00ff; }
  .ruler.top { grid-column: 2 / 4; border-bottom: 3px solid #8c8c8c; }
  .ruler.vert { grid-area: 2 / 1 / 4 / 2; border-right: 1px solid #606060; }
  .canvas { grid-area: 2 / 2; width: 100%; height: 100%; overflow: hidden; background: #fff; border-right: 1px solid #dcdcdc; border-bottom: 1px solid #dcdcdc; shape-rendering: crispEdges; }
  .axis { stroke: #b8d6d2; stroke-dasharray: 24 6 1 5; fill: none; }
  .foil { fill: none; stroke: #000; stroke-width: 2; }
  .chord { fill: none; stroke: #000; }
  .blue { fill: none; stroke: #00f; }
  .red { fill: none; stroke: #f00; }
  .vscroll { display: flex; flex-direction: column; background: #f0f0f0; width: 20px; flex: none; }
  .vscroll button { height: 18px; display: grid; place-items: center; }
  .vscroll button:last-child { margin-top: auto; }
  .vscroll .thumb { background: #cdcdcd; height: 62px; margin-top: 156px; }
  .vscroll .thumb.long { height: 250px; margin-top: 3px; }
  .vscroll.faint .chev { stroke: #bcbcbc; }
  .sheets { grid-column: 2 / 4; display: flex; align-items: flex-start; padding: 1px 0 0 12px; }
  .sheet { display: flex; align-items: center; gap: 4px; height: 22px; width: 82px; padding: 0 4px; color: #6d6d6d; background: #e2e2e2; border: 1px solid #b4b4b4; border-top-color: transparent; }
  .sheet.active { width: 75px; height: 24px; color: #000; background: #f0f0f0; border-color: transparent #000 #000 #fff; border-width: 1px 2px 2px 1px; }
  .sheet .icon { width: 14px; height: 14px; }
  .hscroll { flex: 1; display: flex; margin: 0 22px 0 27px; height: 22px; border-left: 1px solid #6d6d6d; }
  .hscroll button { width: 20px; display: grid; place-items: center; }
  .hscroll .thumb { background: #cdcdcd; width: 10%; margin: 2px auto 1px 62%; }

  .panel { width: 284px; flex: none; display: flex; flex-direction: column; padding-bottom: 26px; }
  .caption { display: flex; align-items: center; gap: 4px; height: 28px; flex: none; padding: 0 2px 0 3px; background: linear-gradient(#bccbd9, #d8e4f0); border: 1px solid #707070; border-width: 2px 1px 0; }
  .caption h2 { margin-right: auto; }
  .pin svg { width: 16px; height: 16px; fill: none; }
  .shut svg { width: 14px; height: 14px; background: #aaa; stroke: #fff; stroke-width: 2; outline: 1px solid #e4e4e4; }
  .strip { display: flex; align-items: center; flex: none; height: 30px; margin: 1px 0; padding-left: 2px; background: #fff; border-bottom: 1px solid #ababab; }
  .palette { flex: 1; min-height: 0; display: flex; }
  .groups { flex: 1; min-width: 0; overflow: hidden; background: #c8d6e4; padding: 2px 3px 0 2px; display: flex; flex-direction: column; gap: 4px; }
  .group { background: #f4f5fa; flex: none; border-radius: 3px 3px 0 0; border-bottom: 1px solid #fff; }
  .head { display: flex; align-items: center; justify-content: space-between; width: 100%; height: 25px; padding: 1px 5px 0 13px; font-weight: 700; color: #0a5aa0; background: linear-gradient(90deg, #fff, #e2e8f0); border-radius: 3px 3px 0 0; }
  .head svg { width: 16px; height: 16px; }
  .head path { fill: none; stroke: #00408b; stroke-width: 1; }
  .cells { display: flex; flex-wrap: wrap; padding: 7px 11px; }
  .cell { width: 28px; height: 28px; display: grid; place-items: center; }
  .cell.picked { background: #ffc26e; border: 1px solid #00008b; }
  .tabs { display: flex; height: 28px; flex: none; margin-bottom: 4px; padding-top: 1px; }
  .tabs button { display: flex; align-items: center; gap: 4px; padding: 0 3px; height: 25px; border: 1px solid #dadada; border-top: 0; border-left: 0; }
  .tabs .active { background: #fff; height: 27px; }
  .minfo { display: flex; align-items: center; padding: 2px 5px 0; height: 32px; flex: none; }
  .framed { border: 1px solid #ababab; border-color: #ababab #fff #fff #ababab; background: #fafafa; }
  .output { display: flex; height: 133px; flex: none; margin: 0 3px; background: #fff; border: 1px solid #ababab; }
  .output textarea { flex: 1; min-width: 0; resize: none; }

  .props { display: flex; align-items: center; height: 52px; flex: none; border-top: 1px solid #fafafa; border-bottom: 1px solid #ababab; }
  .field { display: flex; flex-direction: column; flex: none; padding-right: 4px; white-space: nowrap; }
  .entry { display: flex; }
  .entry input { flex: 1; width: 0; height: 24px; padding-left: 5px; color: #7a7a7a; border: 1px solid #ababab; border-color: #a0a0a0 #fff #fff #a0a0a0; }
  .spin { width: 19px; display: flex; flex-direction: column; }
  .spin i { flex: 1; display: grid; place-items: center; border: 1px solid #dadada; }
  .spin i::before { content: ""; border: 4px solid transparent; border-top: 0; border-bottom-color: #606060; }
  .spin i:last-child { transform: rotate(180deg); }

  .status { display: flex; align-items: center; height: 30px; flex: none; }
  .status p { margin: 0 auto 2px 9px; }
  .status button { height: 26px; padding: 2px 4px 0; border-right: 1px solid #dadada; }
  .coord { display: flex; width: 118px; padding: 2px 0 0 18px; gap: 2px; }
  .coord > div { width: 8px; display: flex; flex-direction: column; align-items: center; font-size: 11px; line-height: 13px; }
  .coord input[type='checkbox'] { appearance: none; width: 7px; height: 8px; margin-top: 2px; border: 1px solid #000; border-top-width: 2px; }
  .num { width: 95px; height: 24px; padding-left: 5px; background: #fff; border: 1px solid #000; }
  .faded { color: #8f8f8f; }
  .zoom { width: 70px; margin-left: 7px; padding-left: 4px; border-left: 1px solid #dadada; height: 26px; }
  .clock { width: 76px; padding-left: 4px; border-left: 1px solid #dadada; height: 26px; }
</style>
